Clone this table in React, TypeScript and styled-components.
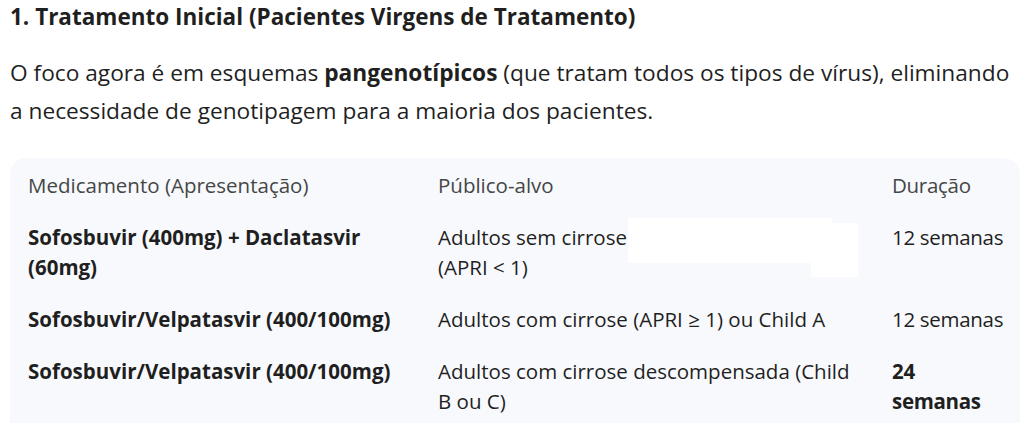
import { Fragment, ReactNode } from "react";
import styled, { createGlobalStyle } from "styled-components";

const GlobalStyle = createGlobalStyle`
  body {
    margin: 0;
    background: #ffffff;
    font-family: "Open Sans", "Noto Sans", sans-serif;
    color: #1f1f1f;
  }
`;

const Page = styled.div`
  padding: 2px 0 0 10px;
  overflow: hidden;
  height: 423px;
  box-sizing: border-box;
`;

const Heading = styled.h3`
  margin: 0;
  font-size: 22.5px;
  font-weight: 700;
  line-height: 30px;
  color: #1f1f1f;
`;

const Paragraph = styled.p`
  margin: 22px 0 0 0;
  font-size: 22.7px;
  line-height: 38px;
  color: #1f1f1f;

  strong {
    font-weight: 700;
  }
`;

const TableBox = styled.div`
  position: relative;
  margin-top: 28px;
  margin-right: 1px;
  background: #f8f9fc;
  border-radius: 16px;
  padding: 1px 0 24px 18px;
`;

const Grid = styled.div`
  display: grid;
  grid-template-columns: 410px 454px 1fr;
  font-size: 20.5px;
  line-height: 30px;
`;

const Cell = styled.div<{ $head?: boolean; $bold?: boolean }>`
  padding: 11px 36px 11px 0;
  color: ${(p) => (p.$head ? "#444746" : "#1f1f1f")};
  font-weight: ${(p) => (p.$bold ? 700 : 400)};

  &:nth-child(3n) {
    padding-right: 0;
    white-space: nowrap;
    letter-spacing: -0.3px;
  }
`;

const Redaction = styled.div`
  position: absolute;
  background: #ffffff;
`;

type Row = {
  med: string;
  target: ReactNode;
  time: ReactNode;
  boldTime: boolean;
};

const rows: Row[] = [
  {
    med: "Sofosbuvir (400mg) + Daclatasvir (60mg)",
    target: (
      <>
        Adultos sem cirrose
        <br />
        (APRI &lt; 1)
      </>
    ),
    time: "12 semanas",
    boldTime: false,
  },
  {
    med: "Sofosbuvir/Velpatasvir (400/100mg)",
    target: "Adultos com cirrose (APRI ≥ 1) ou Child A",
    time: "12 semanas",
    boldTime: false,
  },
  {
    med: "Sofosbuvir/Velpatasvir (400/100mg)",
    target: "Adultos com cirrose descompensada (Child B ou C)",
    time: (
      <>
        24
        <br />
        semanas
      </>
    ),
    boldTime: true,
  },
];

export default function App() {
  return (
    <Page>
      <GlobalStyle />
      <Heading>1. Tratamento Inicial (Pacientes Virgens de Tratamento)</Heading>
      <Paragraph>
        O foco agora é em esquemas <strong>pangenotípicos</strong> (que tratam
        todos os tipos de vírus), eliminando a necessidade de genotipagem para a
        maioria dos pacientes.
      </Paragraph>
      <TableBox>
        <Grid>
          <Cell $head>Medicamento (Apresentação)</Cell>
          <Cell $head>Público-alvo</Cell>
          <Cell $head>Duração</Cell>
          {rows.map((r, i) => (
            <Fragment key={i}>
              <Cell $bold>{r.med}</Cell>
              <Cell>{r.target}</Cell>
              <Cell $bold={r.boldTime}>{r.time}</Cell>
            </Fragment>
          ))}
        </Grid>
        <Redaction style={{ left: 618, top: 60, width: 204, height: 45 }} />
        <Redaction style={{ left: 801, top: 65, width: 47, height: 54 }} />
      </TableBox>
    </Page>
  );
}
